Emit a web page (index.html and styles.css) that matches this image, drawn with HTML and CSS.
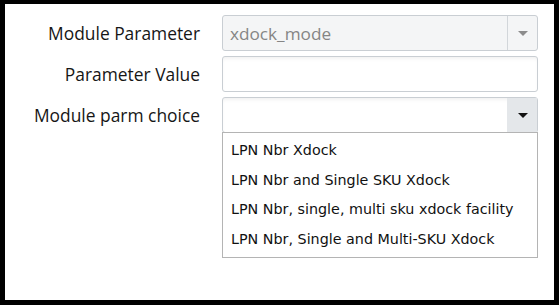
FILE: index.html
```html
<!DOCTYPE html>
<html lang="en">
<head>
    <meta charset="UTF-8">
    <title>Module Parameter</title>
    <link rel="stylesheet" href="styles.css">
</head>
<body>
    <div class="frame">
        <div class="form-grid">
            <label class="form-label">Module Parameter</label>
            <div class="select select-disabled">
                <span class="select-value">xdock_mode</span>
                <span class="select-btn"><span class="caret"></span></span>
            </div>

            <label class="form-label">Parameter Value</label>
            <div class="text-input"></div>

            <label class="form-label">Module parm choice</label>
            <div class="select select-open">
                <span class="select-value"></span>
                <span class="select-btn"><span class="caret"></span></span>
                <ul class="dropdown">
                    <li>LPN Nbr Xdock</li>
                    <li>LPN Nbr and Single SKU Xdock</li>
                    <li>LPN Nbr, single, multi sku xdock facility</li>
                    <li>LPN Nbr, Single and Multi-SKU Xdock</li>
                </ul>
            </div>
        </div>
    </div>
</body>
</html>
```

FILE: styles.css
```css
html, body {
    margin: 0;
    padding: 0;
    background: #fff;
}

.frame {
    box-sizing: border-box;
    width: 559px;
    height: 305px;
    border: 5px solid #000;
    border-top-width: 4px;
    padding: 11px 16px 0 0;
}

.form-grid {
    display: grid;
    grid-template-columns: 1fr 316px;
    grid-auto-rows: 36px;
    column-gap: 22px;
    row-gap: 5px;
}

.form-label {
    display: flex;
    align-items: center;
    justify-content: flex-end;
    font-family: "Open Sans", sans-serif;
    font-size: 17.4px;
    color: #161616;
}

.select, .text-input {
    position: relative;
    box-sizing: border-box;
    height: 36px;
    border: 1px solid #c9ced3;
    border-radius: 3px;
    background: #fff;
    box-shadow: inset 0 3px 4px -2px rgba(0, 0, 0, 0.08);
}

.select {
    display: flex;
    align-items: center;
}

.select-value {
    flex: 1;
    padding-left: 7px;
    font-family: "Open Sans", sans-serif;
    font-size: 17.2px;
    color: #858585;
}

.select-btn {
    display: flex;
    align-items: center;
    justify-content: center;
    width: 29px;
    height: 100%;
    border-left: 1px solid #d2d6da;
}

.caret {
    width: 0;
    height: 0;
    border-left: 5px solid transparent;
    border-right: 5px solid transparent;
    border-top: 5px solid #8c8c8c;
}

.select-disabled {
    background: #f4f5f6;
    box-shadow: none;
}

.select-open .select-btn {
    background: #e4e7ea;
    border-left-color: #e4e7ea;
}

.select-open .caret {
    border-top-color: #111;
}

.dropdown {
    position: absolute;
    top: 100%;
    left: -1px;
    right: -1px;
    margin: 0;
    padding: 3px 0 2px;
    list-style: none;
    background: #fff;
    border: 1px solid #b4b4b4;
    font-family: "DejaVu Sans", sans-serif;
    font-size: 14.3px;
    color: #111;
}

.dropdown li {
    height: 29.7px;
    line-height: 29.7px;
    padding-left: 8px;
    white-space: nowrap;
}
```
